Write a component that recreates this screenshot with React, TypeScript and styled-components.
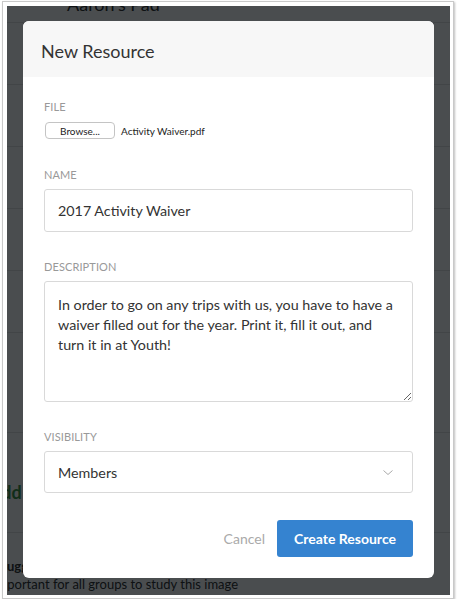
import React from "react";
import styled, { createGlobalStyle } from "styled-components";

const GlobalStyle = createGlobalStyle`
  html, body {
    margin: 0;
    padding: 0;
    background: #ffffff;
  }
  * {
    box-sizing: border-box;
  }
`;

const Frame = styled.div`
  margin: 1px 0 0 2px;
  width: 452px;
  height: 598px;
  padding: 4px 3px 3px 4px;
  border: 1px solid #c9c9c9;
  box-shadow: 1px 1px 2px rgba(0, 0, 0, 0.25);
  background: #fff;
`;

const Screen = styled.div`
  position: relative;
  width: 443px;
  height: 589px;
  overflow: hidden;
  background: #ffffff;
  font-family: Lato, "Open Sans", sans-serif;
`;

/* 모달 뒤에 깔린 페이지 */
const Page = styled.div`
  display: flex;
  flex-direction: column;
`;

const PageHeader = styled.div`
  display: flex;
  align-items: center;
  gap: 7px;
  height: 37px;
  margin-top: -20px;
  padding-left: 45px;
  font-size: 18px;
  color: #222;
  border-bottom: 1px solid #e2e2e2;
`;

const Row = styled.div<{ $height: number }>`
  height: ${(p) => p.$height}px;
  border-bottom: 1px solid #e2e2e2;
`;

const AddLink = styled.div`
  height: 100px;
  padding-top: 48px;
  margin-left: -18px;
  font-size: 18px;
  line-height: 22px;
  font-weight: 700;
  color: #2f8a3a;
  border-bottom: 1px solid #e2e2e2;
`;

const Suggest = styled.div`
  display: flex;
  flex-direction: column;
  padding-top: 24px;
  font-size: 13px;
  color: #222;
  line-height: 18px;
`;

const SuggestLine = styled.span<{ $bold?: boolean; $shift: number }>`
  margin-left: ${(p) => p.$shift}px;
  font-weight: ${(p) => (p.$bold ? 700 : 400)};
  white-space: nowrap;
`;

const Overlay = styled.div`
  position: absolute;
  inset: 0;
  background: rgba(7, 11, 14, 0.73);
  padding: 15px 0 0 16px;
`;

const Modal = styled.div`
  width: 411px;
  height: 557px;
  background: #fff;
  border-radius: 6px;
  overflow: hidden;
  display: flex;
  flex-direction: column;
`;

const ModalHeader = styled.div`
  height: 56px;
  flex-shrink: 0;
  display: flex;
  align-items: center;
  padding: 4px 18px 0;
  background: #f7f7f7;
  font-size: 18px;
  color: #333;
`;

const ModalBody = styled.div`
  display: flex;
  flex-direction: column;
  gap: 28px;
  padding: 23px 21px 0;
`;

const Field = styled.div`
  display: flex;
  flex-direction: column;
`;

const Label = styled.label`
  display: block;
  font-size: 11px;
  line-height: 14px;
  color: #999;
  letter-spacing: 0.1px;
  margin-bottom: 7px;
  text-transform: uppercase;
`;

const FileRow = styled.div`
  display: flex;
  align-items: center;
  gap: 6px;
  margin: 1px 0 1px;
  padding-left: 1px;
`;

const BrowseButton = styled.button`
  width: 70px;
  height: 17px;
  padding: 0;
  border: 1px solid #c4c4c4;
  border-radius: 4px;
  background: #fff;
  font-family: Lato, sans-serif;
  font-size: 10px;
  color: #222;
`;

const FileName = styled.span`
  font-size: 10px;
  color: #222;
`;

const TextInput = styled.input`
  width: 100%;
  height: 43px;
  padding: 0 13px;
  border: 1px solid #d9d9d9;
  border-radius: 3px;
  font-family: Lato, sans-serif;
  font-size: 14.3px;
  color: #333;
  outline: none;
`;

const TextArea = styled.textarea`
  width: 100%;
  height: 121px;
  padding: 13px 13px;
  border: 1px solid #d9d9d9;
  border-radius: 3px;
  font-family: Lato, sans-serif;
  font-size: 14.3px;
  line-height: 20px;
  color: #333;
  outline: none;
`;

const Select = styled.div`
  display: flex;
  align-items: center;
  justify-content: space-between;
  height: 42px;
  padding: 0 19px 0 13px;
  border: 1px solid #d9d9d9;
  border-radius: 3px;
  font-size: 14.3px;
  color: #333;
`;

const Footer = styled.div`
  display: flex;
  justify-content: flex-end;
  align-items: center;
  gap: 12px;
  padding: 27px 21px 0;
`;

const CancelButton = styled.button`
  border: none;
  background: none;
  padding: 0;
  font-family: Lato, sans-serif;
  font-size: 14px;
  color: #aaa;
`;

const PrimaryButton = styled.button`
  width: 136px;
  height: 37px;
  border: none;
  border-radius: 3px;
  background: #3583d0;
  color: #fff;
  font-family: Lato, sans-serif;
  font-size: 14px;
  font-weight: 700;
`;

const Chevron: React.FC<{ size: number; color: string }> = ({ size, color }) => (
  <svg width={size} height={size / 2} viewBox="0 0 10 5" fill="none">
    <path d="M0.5 0.5 L5 4.5 L9.5 0.5" stroke={color} strokeWidth="1" />
  </svg>
);

const App: React.FC = () => {
  return (
    <>
      <GlobalStyle />
      <Frame>
        <Screen>
          <Page>
            <PageHeader>
              <Chevron size={8} color="#222" />
              Aaron's Pad
            </PageHeader>
            <Row $height={62} />
            <Row $height={62} />
            <Row $height={62} />
            <Row $height={62} />
            <Row $height={62} />
            <Row $height={100} />
            <AddLink>Add</AddLink>
            <Suggest>
              <SuggestLine $bold $shift={-7}>Suggested</SuggestLine>
              <SuggestLine $shift={-14}>Important for all groups to study this image</SuggestLine>
            </Suggest>
          </Page>
          <Overlay>
            <Modal>
              <ModalHeader>New Resource</ModalHeader>
              <ModalBody>
                <Field>
                  <Label>File</Label>
                  <FileRow>
                    <BrowseButton>Browse...</BrowseButton>
                    <FileName>Activity Waiver.pdf</FileName>
                  </FileRow>
                </Field>
                <Field>
                  <Label>Name</Label>
                  <TextInput defaultValue="2017 Activity Waiver" />
                </Field>
                <Field>
                  <Label>Description</Label>
                  <TextArea defaultValue="In order to go on any trips with us, you have to have a waiver filled out for the year. Print it, fill it out, and turn it in at Youth!" />
                </Field>
                <Field>
                  <Label>Visibility</Label>
                  <Select>
                    <span>Members</span>
                    <Chevron size={10} color="#aaa" />
                  </Select>
                </Field>
              </ModalBody>
              <Footer>
                <CancelButton>Cancel</CancelButton>
                <PrimaryButton>Create Resource</PrimaryButton>
              </Footer>
            </Modal>
          </Overlay>
        </Screen>
      </Frame>
    </>
  );
};

export default App;
